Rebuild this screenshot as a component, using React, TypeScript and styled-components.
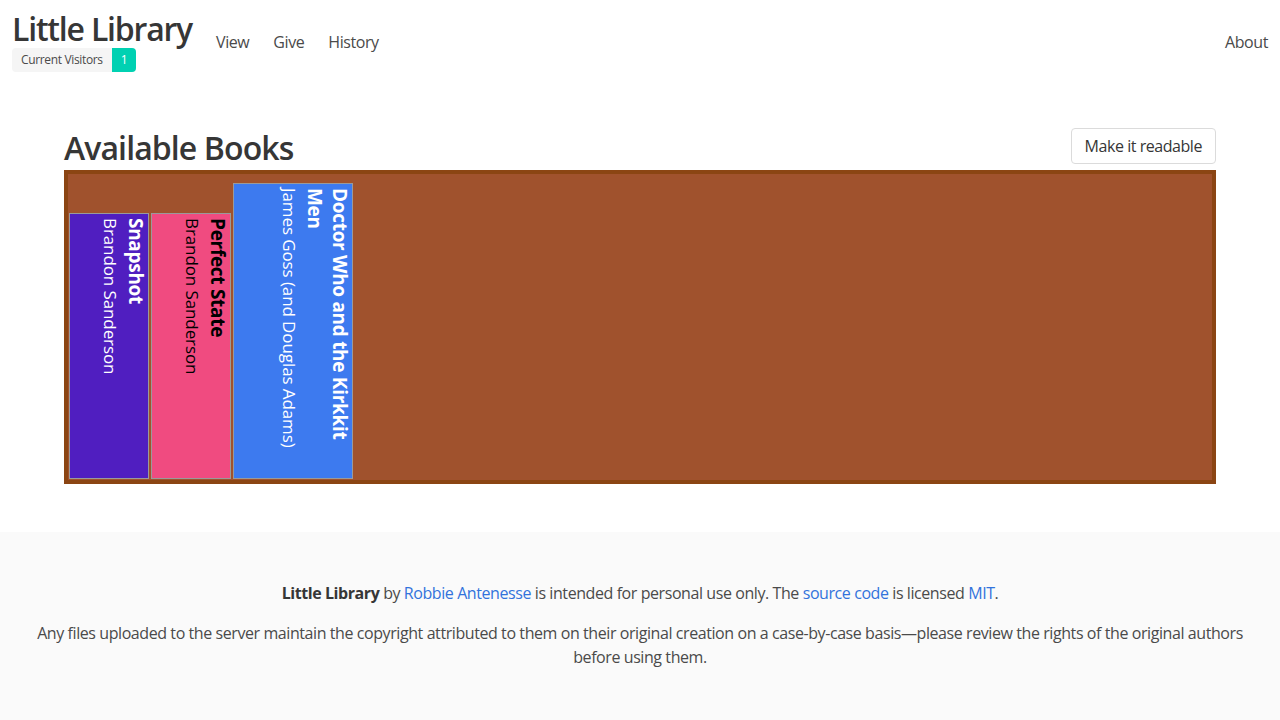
import { createGlobalStyle, styled } from 'styled-components'

const GlobalStyle = createGlobalStyle`
  html, body {
    margin: 0;
    padding: 0;
    background: #fff;
  }
  body {
    font-family: "Open Sans", "Noto Sans", sans-serif;
    font-size: 16px;
    line-height: 1.5;
    color: #4a4a4a;
    letter-spacing: -0.42px;
  }
  * {
    box-sizing: border-box;
  }
`

type Book = {
  title: string
  author: string
  color: string
  text: string
  width: number
  height: number
}

const books: Book[] = [
  {
    title: 'Snapshot',
    author: 'Brandon Sanderson',
    color: '#501ec0',
    text: '#ffffff',
    width: 80,
    height: 266,
  },
  {
    title: 'Perfect State',
    author: 'Brandon Sanderson',
    color: '#f04b80',
    text: '#000000',
    width: 80,
    height: 266,
  },
  {
    title: 'Doctor Who and the Kirkkit Men',
    author: 'James Goss (and Douglas Adams)',
    color: '#3d7aef',
    text: '#ffffff',
    width: 120,
    height: 296,
  },
]

function App() {
  return (
    <>
      <GlobalStyle />
      <Navbar>
        <Brand>
          <SiteTitle>Little Library</SiteTitle>
          <Tags>
            <Tag>Current Visitors</Tag>
            <Tag primary>1</Tag>
          </Tags>
        </Brand>
        <NavItem href="#">View</NavItem>
        <NavItem href="#">Give</NavItem>
        <NavItem href="#">History</NavItem>
        <NavEnd>
          <NavItem href="#">About</NavItem>
        </NavEnd>
      </Navbar>

      <Section>
        <Container>
          <HeaderRow>
            <PageTitle>Available Books</PageTitle>
            <Button>Make it readable</Button>
          </HeaderRow>
          <Shelf>
            {books.map((b) => (
              <BookSpine
                key={b.title}
                bg={b.color}
                fg={b.text}
                w={b.width}
                h={b.height}
              >
                <BookTitle>{b.title}</BookTitle>
                <BookAuthor>{b.author}</BookAuthor>
              </BookSpine>
            ))}
          </Shelf>
        </Container>
      </Section>

      <Footer>
        <p>
          <strong>Little Library</strong> by <Link href="#">Robbie Antenesse</Link>{' '}
          is intended for personal use only. The{' '}
          <Link href="#">source code</Link> is licensed <Link href="#">MIT</Link>.
        </p>
        <p>
          Any files uploaded to the server maintain the copyright attributed to
          them on their original creation on a case-by-case basis—please review
          the rights of the original authors before using them.
        </p>
      </Footer>
    </>
  )
}

export default App

const Navbar = styled.nav`
  display: flex;
  align-items: center;
  min-height: 76px;
  padding-top: 3px;
`

const Brand = styled.div`
  display: flex;
  flex-direction: column;
  align-items: flex-start;
  padding: 8px 12px;
`

const SiteTitle = styled.h1`
  margin: 0;
  font-size: 32px;
  font-weight: 600;
  line-height: 36px;
  color: #363636;
  letter-spacing: -1.2px;
`

const Tags = styled.div`
  display: flex;
  margin-top: 1px;
`

const Tag = styled.span<{ primary?: boolean }>`
  display: inline-flex;
  align-items: center;
  height: 24px;
  padding: 0 9px;
  font-size: 12px;
  letter-spacing: -0.35px;
  background: ${(p) => (p.primary ? '#00d1b2' : '#f5f5f5')};
  color: ${(p) => (p.primary ? '#fff' : '#4a4a4a')};
  border-radius: ${(p) => (p.primary ? '0 4px 4px 0' : '4px 0 0 4px')};
`

const NavItem = styled.a`
  display: block;
  padding: 8px 12px;
  color: #4a4a4a;
  text-decoration: none;
  font-size: 16px;
  line-height: 24px;
`

const NavEnd = styled.div`
  margin-left: auto;
  display: flex;
`

const Section = styled.section`
  padding: 48px 24px;
`

const Container = styled.div`
  width: 1152px;
  margin: 0 auto;
`

const HeaderRow = styled.div`
  display: flex;
  justify-content: space-between;
  align-items: flex-end;
  margin-bottom: 6px;
`

const PageTitle = styled.h2`
  margin: 0 0 -2px;
  font-size: 32px;
  font-weight: 600;
  line-height: 36px;
  color: #363636;
  letter-spacing: -0.9px;
`

const Button = styled.button`
  height: 36px;
  padding: 0 13px;
  border: 1px solid #dbdbdb;
  border-radius: 4px;
  background: #fff;
  color: #363636;
  font-family: inherit;
  font-size: 16px;
  letter-spacing: -0.45px;
`

const Shelf = styled.div`
  display: flex;
  align-items: flex-end;
  height: 314px;
  border: 4px solid #8b4513;
  background: #a0522d;
`

const BookSpine = styled.div<{ bg: string; fg: string; w: number; h: number }>`
  writing-mode: vertical-rl;
  width: ${(p) => p.w}px;
  height: ${(p) => p.h}px;
  margin: 0 1px 1px;
  padding: 4px 0;
  background: ${(p) => p.bg};
  color: ${(p) => p.fg};
  border: 1px solid #9a9a9a;
`

const BookTitle = styled.div`
  font-size: 19px;
  font-weight: 700;
  line-height: 25px;
  letter-spacing: -0.3px;
`

const BookAuthor = styled.div`
  font-size: 17px;
  line-height: 25px;
  letter-spacing: -0.1px;
`

const Footer = styled.footer`
  background: #fafafa;
  padding: 37px 24px 48px;
  text-align: center;
  p {
    margin: 12px 0 16px;
  }
  strong {
    color: #363636;
    font-weight: 700;
  }
`

const Link = styled.a`
  color: #3273dc;
  text-decoration: none;
`
